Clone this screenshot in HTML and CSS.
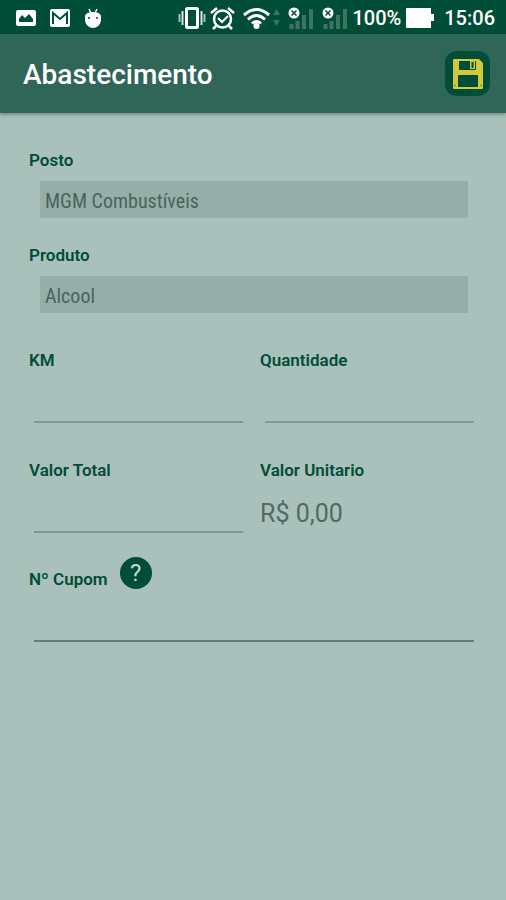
FILE: index.html
```html
<!DOCTYPE html>
<html lang="pt-BR">
<head>
<meta charset="utf-8">
<meta name="viewport" content="width=device-width, initial-scale=1">
<title>Abastecimento</title>
<link rel="stylesheet" href="styles.css">
</head>
<body>
<div class="status">
  <div class="notices">
    <svg width="20" height="16" viewBox="0 0 20 16"><path fill="#fff" fill-rule="evenodd" d="M2 0h16q2 0 2 2v12q0 2-2 2H2q-2 0-2-2V2q0-2 2-2zM3 12h14V9l-4-5-4 4-3-3-3 4z"/></svg>
    <svg width="20" height="18" viewBox="0 0 20 18"><rect width="20" height="18" rx="2" fill="#fff"/><path d="M3 15V4l7 6 7-6v11" fill="none" stroke="#004d38" stroke-width="2"/></svg>
    <svg width="18" height="20" viewBox="0 0 18 20"><path d="M5 1l2 4M13 1l-2 4" stroke="#fff" stroke-width="1.5"/><path d="M1 8q1-4 8-4t8 4v5q-2 7-8 7t-8-7z" fill="#fff"/><circle cx="5" cy="10" r="1" fill="#004d38"/><circle cx="13" cy="10" r="1" fill="#004d38"/></svg>
  </div>
  <div class="system">
    <svg width="28" height="24" viewBox="0 0 28 24"><rect x="8.500" y="2.500" width="11" height="19" rx="1" fill="none" stroke="#fff" stroke-width="3"/><path d="M4.500 5v14M23.500 5v14" stroke="#d5e2de" stroke-width="2"/><path d="M1.500 8v8M26.500 8v8" stroke="#a5c0b6" stroke-width="2"/></svg>
    <svg width="25" height="24" viewBox="0 0 25 24"><g fill="none" stroke="#fff"><circle cx="12.500" cy="13" r="8.500" stroke-width="2.500"/><path d="M1 7l6-5M24 7l-6-5M6 20l-3 3M19 20l3 3" stroke-width="2.500"/><path d="M8 12l4 4 6-6" stroke-width="2"/></g></svg>
    <svg class="wifi" width="37" height="24" viewBox="0 0 37 24"><g fill="none" stroke="#fff" stroke-width="3"><path d="M1 9q12.500-11 25 0M5 13.500q8.500-8 17 0M9 17.500q4.500-4 9 0"/></g><circle cx="13.500" cy="20" r="3" fill="#fff"/><path d="M30 9l3.500-6L37 9zM30 14l3.500 6 3.500-6z" fill="#40735f"/></svg>
    <svg class="signal" width="26" height="24" viewBox="0 0 26 24"><path d="M3.500 18v5M9.500 15v8M16 9v14M23 3v20" stroke="#40735f" stroke-width="4"/><circle cx="6" cy="7" r="5.500" fill="#fff"/><path d="M3.500 4.500l5 5M8.500 4.500l-5 5" stroke="#004d38" stroke-width="1.500"/></svg>
    <svg width="26" height="24" viewBox="0 0 26 24"><path d="M3.500 18v5M9.500 15v8M16 9v14M23 3v20" stroke="#40735f" stroke-width="4"/><circle cx="6" cy="7" r="5.500" fill="#fff"/><path d="M3.500 4.500l5 5M8.500 4.500l-5 5" stroke="#004d38" stroke-width="1.500"/></svg>
    <span>100%</span>
    <svg class="battery" width="28" height="20" viewBox="0 0 28 20"><path d="M1 0h24v6h3v7h-3v7H1q-1 0-1-1V1q0-1 1-1z" fill="#fff"/></svg>
    <time>15:06</time>
  </div>
</div>
<header class="bar">
  <h1>Abastecimento</h1>
  <button class="save" type="submit" form="refuel" aria-label="Salvar">
    <svg width="30" height="30" viewBox="0 0 30 30"><path fill="#d3c83c" fill-rule="evenodd" d="M1 0h25l4 4v25q0 1-1 1H1q-1 0-1-1V1q0-1 1-1zM6 2v8q0 1 1 1h15q1 0 1-1V2zM5 17v11h20V17q0-1-1-1H6q-1 0-1 1z"/><path d="M17 2h5v8h-5z" fill="#d3c83c"/><path d="M19.500 3v6" stroke="#004d38" stroke-width="2"/><path d="M2 26v1M28 26v1" stroke="#004d38"/></svg>
  </button>
</header>
<main>
  <form id="refuel" class="form">
    <div class="group wide">
      <label for="station">Posto</label>
      <input class="filled" id="station" type="text" value="MGM Combustíveis" readonly>
    </div>
    <div class="group wide">
      <label for="product">Produto</label>
      <input class="filled" id="product" type="text" value="Alcool" readonly>
    </div>
    <div class="group numbers">
      <label for="km">KM</label>
      <input class="line" id="km" type="text">
    </div>
    <div class="group numbers">
      <label for="amount">Quantidade</label>
      <input class="line" id="amount" type="text">
    </div>
    <div class="group totals">
      <label for="total">Valor Total</label>
      <input class="line" id="total" type="text">
    </div>
    <div class="group totals">
      <label for="unit">Valor Unitario</label>
      <output id="unit">R$ 0,00</output>
    </div>
    <div class="group wide coupon">
      <div class="heading">
        <label for="coupon">Nº Cupom</label>
        <button class="help" type="button">?</button>
      </div>
      <input class="line dark" id="coupon" type="text">
    </div>
  </form>
</main>
</body>
</html>
```
FILE: styles.css
```css
* {
  box-sizing: border-box;
}

body {
  margin: 0;
  min-height: 100vh;
  background: #a9c1ba;
  color: #004d38;
  font-family: Roboto, "Liberation Sans", sans-serif;
}

svg {
  display: block;
  flex: none;
}

.status {
  display: flex;
  align-items: center;
  justify-content: space-between;
  height: 34px;
  padding: 2px 11px 0 16px;
  background: #004d38;
  color: #fff;
  font-size: 20px;
  font-weight: 500;
  line-height: 24px;
}

.notices {
  display: flex;
  align-items: center;
  gap: 14px;
}

.system {
  display: flex;
  align-items: center;
  gap: 4px;
}

.wifi {
  margin: 0 4px;
}

.signal {
  margin-right: 4px;
}

.battery {
  margin: 0 6px 0 1px;
}

.bar {
  position: relative;
  display: flex;
  align-items: center;
  justify-content: space-between;
  height: 79px;
  padding: 0 16px 0 23px;
  background: #2f6657;
  box-shadow: 0 1px 4px rgba(0, 0, 0, 0.4);
}

h1 {
  margin: 0;
  padding-top: 2px;
  color: #fff;
  font-size: 28px;
  font-weight: 500;
  line-height: 32px;
}

button {
  border: 0;
  padding: 0;
  font-family: inherit;
}

.save {
  display: grid;
  place-items: center;
  width: 45px;
  height: 45px;
  border-radius: 12px;
  background: #004d38;
}

.form {
  display: grid;
  grid-template-columns: 1fr 1fr;
  column-gap: 12px;
  padding: 37px 28px;
}

.group {
  display: flex;
  flex-direction: column;
  min-width: 0;
}

.wide {
  grid-column: 1 / -1;
  margin-bottom: 27px;
}

.numbers {
  margin: 10px 0 37px;
}

.totals {
  margin-bottom: 24px;
}

.coupon {
  margin-bottom: 0;
}

label {
  padding-left: 1px;
  font-size: 17px;
  font-weight: 600;
  line-height: 20px;
}

input {
  border: 0;
  border-radius: 0;
  background: transparent;
  color: #4b635c;
  font-family: inherit;
  font-size: 20px;
  outline: 0;
}

.filled {
  height: 37px;
  margin: 11px 10px 0 12px;
  padding: 2px 5px 0;
  background: #96aea8;
  font-family: "Roboto Condensed", Roboto, sans-serif;
}

.line {
  height: 53px;
  margin: 0 4px 0 6px;
  padding: 20px 4px 4px;
  border-bottom: 2px solid #809a93;
}

.dark {
  border-bottom-color: #5f7f76;
}

output {
  padding: 18px 0 0 1px;
  color: #526a63;
  font-size: 25px;
  line-height: 32px;
}

.heading {
  display: flex;
  align-items: flex-end;
  gap: 12px;
}

.help {
  width: 32px;
  height: 32px;
  border-radius: 50%;
  background: #004d38;
  color: #c5d7d1;
  font-size: 24px;
  line-height: 32px;
}
```
